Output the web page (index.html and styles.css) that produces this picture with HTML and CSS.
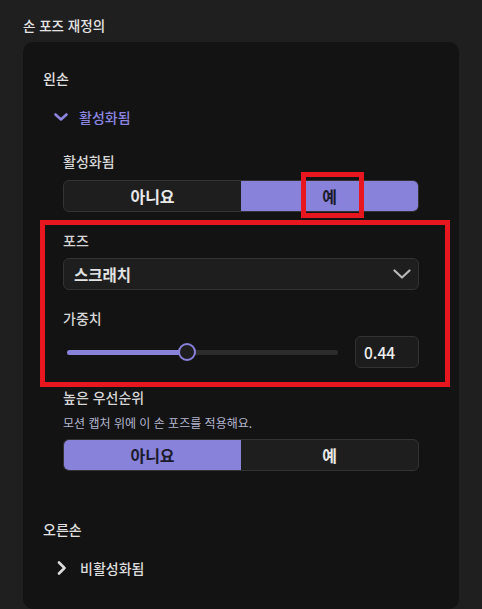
FILE: index.html
```html
<!DOCTYPE html>
<html lang="ko">
<head>
<meta charset="utf-8">
<title>손 포즈 재정의</title>
<link rel="stylesheet" href="styles.css">
</head>
<body>
<div class="page">
  <div class="title">손 포즈 재정의</div>
  <div class="panel">
    <div class="hand-label">왼손</div>
    <div class="toggle active">
      <svg class="chev-down" width="14" height="8" viewBox="0 0 14 8"><path d="M1.5 1.5 L7 6.5 L12.5 1.5" fill="none" stroke="currentColor" stroke-width="2.6" stroke-linecap="round" stroke-linejoin="round"/></svg>
      <span>활성화됨</span>
    </div>
    <div class="fields">
      <div class="label">활성화됨</div>
      <div class="seg">
        <div class="seg-item">아니요</div>
        <div class="seg-item on">예</div>
      </div>
      <div class="label gap">포즈</div>
      <div class="select">
        <span>스크래치</span>
        <svg class="select-chev" width="18" height="10" viewBox="0 0 18 10"><path d="M1.5 1.5 L9 8.5 L16.5 1.5" fill="none" stroke="currentColor" stroke-width="2.2" stroke-linecap="round" stroke-linejoin="round"/></svg>
      </div>
      <div class="label gap">가중치</div>
      <div class="slider-row">
        <div class="slider">
          <div class="track"><div class="fill" style="width:44.3%"></div></div>
          <div class="thumb" style="left:44.3%"></div>
        </div>
        <div class="num">0.44</div>
      </div>
      <div class="label gap2">높은 우선순위</div>
      <div class="desc">모션 캡처 위에 이 손 포즈를 적용해요.</div>
      <div class="seg seg2">
        <div class="seg-item on">아니요</div>
        <div class="seg-item">예</div>
      </div>
    </div>
    <div class="hand-label right">오른손</div>
    <div class="toggle">
      <svg class="chev-right" width="10" height="14" viewBox="0 0 10 14"><path d="M2 1.5 L7.5 7 L2 12.5" fill="none" stroke="currentColor" stroke-width="2.6" stroke-linecap="round" stroke-linejoin="round"/></svg>
      <span>비활성화됨</span>
    </div>
  </div>
  <div class="mark mark-small"></div>
  <div class="mark mark-big"></div>
</div>
</body>
</html>
```
FILE: styles.css
```css
* { box-sizing: border-box; }
html, body { margin: 0; padding: 0; }
body {
  background: #1f1f1f;
  font-family: "Noto Sans CJK KR", "Noto Sans", sans-serif;
  color: #e2e2e2;
  width: 482px;
  height: 609px;
  overflow: hidden;
}
.page { position: relative; height: 609px; }
.title {
  height: 42px;
  padding: 16px 0 0 23px;
  font-size: 13.5px;
  line-height: 18px;
  font-weight: 500;
  color: #e4e4e4;
}
.panel {
  margin: 0 23px;
  background: #131313;
  border-radius: 10px;
  padding: 26px 20px 0;
  height: 567px;
}
.hand-label {
  font-size: 14px;
  line-height: 20px;
  font-weight: 500;
  color: #e0e0e0;
}
.hand-label.right { margin-top: 48px; }
.toggle {
  margin-top: 19px;
  display: flex;
  align-items: center;
  height: 20px;
  padding-left: 11px;
  font-size: 14px;
  font-weight: 500;
  color: #dcdcdc;
}
.toggle.active { color: #8b85e0; }
.toggle .chev-down { margin-right: 11px; }
.toggle .chev-right { margin-left: 3px; margin-right: 13px; }
.fields { padding: 0 20px; }
.label {
  margin-top: 24px;
  font-size: 14px;
  line-height: 20px;
  font-weight: 500;
  color: #d6d6d6;
}
.label.gap { margin-top: 18px; }
.label.gap2 { margin-top: 19px; }
.seg {
  margin-top: 9px;
  display: flex;
  height: 32px;
  border: 1px solid #333;
  border-radius: 6px;
  background: #1e1e1e;
  overflow: hidden;
}
.seg2 { margin-top: 7px; }
.seg-item {
  flex: 1;
  display: flex;
  align-items: center;
  justify-content: center;
  font-size: 16px;
  font-weight: 700;
  color: #e8e8e8;
}
.seg-item.on { background: #8882db; color: #1b1a2b; }
.select {
  margin-top: 8px;
  height: 32px;
  border: 1px solid #333;
  border-radius: 6px;
  background: #1e1e1e;
  display: flex;
  align-items: center;
  justify-content: space-between;
  padding: 0 7px 0 10px;
  font-size: 15.5px;
  font-weight: 700;
  color: #e2e2e2;
}
.select-chev { color: #b8b8b8; }
.slider-row {
  margin-top: 8px;
  display: flex;
  align-items: center;
  height: 32px;
}
.slider {
  flex: 1;
  position: relative;
  height: 18px;
  margin: 0 17px 0 4px;
  display: flex;
  align-items: center;
}
.track {
  width: 100%;
  height: 5px;
  border-radius: 3px;
  background: #2c2c2c;
  overflow: hidden;
}
.fill { height: 100%; background: #8882db; }
.thumb {
  position: absolute;
  top: 0;
  width: 18px;
  height: 18px;
  margin-left: -9px;
  border-radius: 50%;
  border: 2px solid #8882db;
  background: #1e1e1e;
}
.num {
  width: 64px;
  height: 32px;
  border: 1px solid #333;
  border-radius: 6px;
  background: #1c1c1c;
  display: flex;
  align-items: center;
  padding-left: 8px;
  font-size: 15.5px;
  font-weight: 500;
  color: #ececec;
}
.desc {
  margin-top: 7px;
  font-size: 12px;
  line-height: 18px;
  color: #b3b6cf;
}
.mark {
  position: absolute;
  border: 5px solid #e8161f;
}
.mark-small { left: 301px; top: 172px; width: 63px; height: 46px; }
.mark-big { left: 40px; top: 220px; width: 410px; height: 167px; }
```
